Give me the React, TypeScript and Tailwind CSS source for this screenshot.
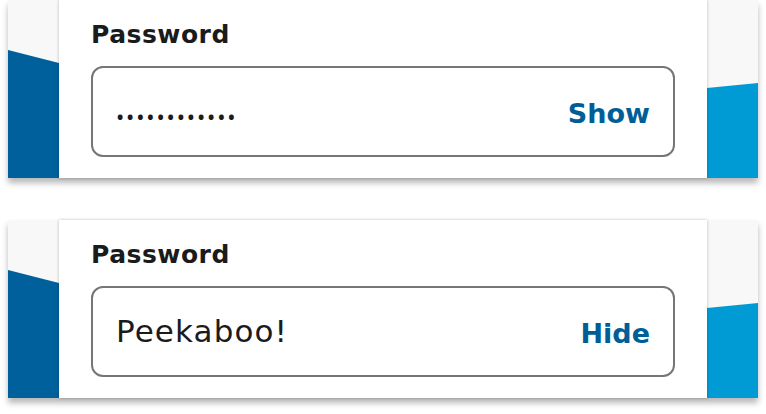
import React from 'react';

interface PanelProps {
  masked: boolean;
}

function PasswordPanel({ masked }: PanelProps) {
  return (
    <div className="flex h-[178px] mx-2 bg-[#f8f8f8] shadow-[0_5px_6px_rgba(0,0,0,0.28)]">
      <div className="relative w-[51px] shrink-0">
        <div className="absolute inset-0 bg-[#00609b] [clip-path:polygon(0_50px,100%_63px,100%_100%,0_100%)]" />
      </div>

      <div className="flex-1 bg-white shadow-[0_0_3px_rgba(0,0,0,0.25)] z-10 px-8 pt-[18px]">
        <label className="block text-[25px] leading-[34px] font-bold tracking-[0.5px] text-[#1b1b1b]">
          Password
        </label>
        <div className="mt-[14px] h-[91px] flex items-center justify-between border-2 border-[#767676] rounded-[12px] pl-[23px] pr-[23px]">
          {masked ? (
            <span className="pt-[10px] font-['Noto_Sans',sans-serif] text-[22px] tracking-[1.85px] text-[#1b1b1b]">
              ••••••••••••
            </span>
          ) : (
            <span className="text-[31px] tracking-[1.1px] text-[#1b1b1b]">Peekaboo!</span>
          )}
          <button className="pt-[5px] text-[27px] font-bold text-[#005e97]">
            {masked ? 'Show' : 'Hide'}
          </button>
        </div>
      </div>

      <div className="relative w-[51px] shrink-0">
        <div className="absolute inset-0 bg-[#009bd4] [clip-path:polygon(0_88px,100%_83px,100%_100%,0_100%)]" />
      </div>
    </div>
  );
}

export default function App() {
  return (
    <div className="w-[766px] h-[414px] bg-white flex flex-col gap-[42px] font-['DejaVu_Sans',sans-serif]">
      <PasswordPanel masked />
      <PasswordPanel masked={false} />
    </div>
  );
}
